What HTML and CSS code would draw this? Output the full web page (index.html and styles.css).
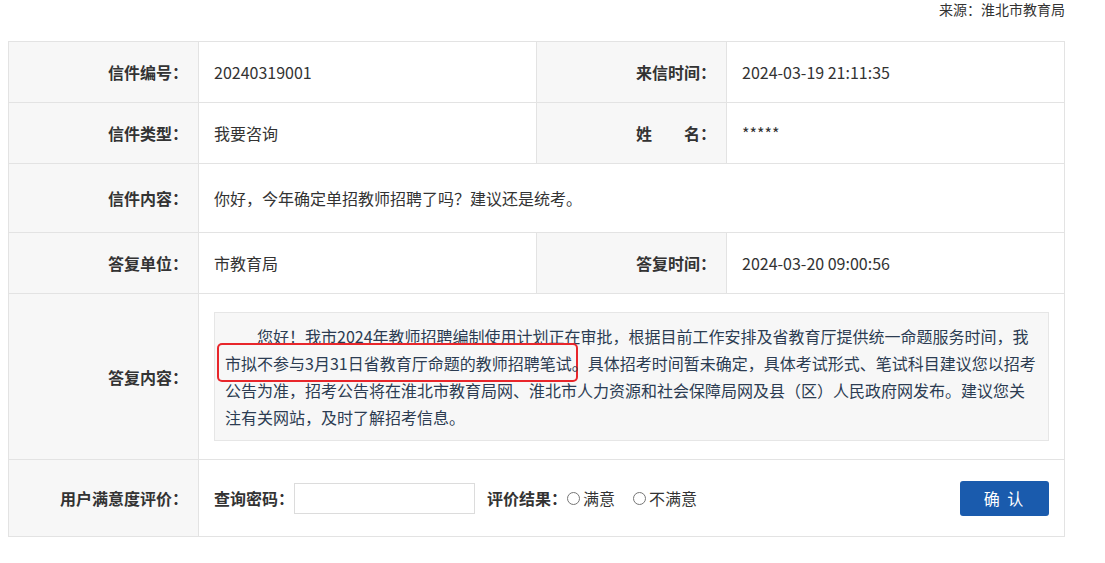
FILE: index.html
```html
<!DOCTYPE html>
<html lang="zh-CN">
<head>
<meta charset="utf-8">
<title>信件详情</title>
<link rel="stylesheet" href="styles.css">
</head>
<body>
<div class="letter-wrap">
	<div class="source">来源：淮北市教育局</div>

	<table class="letter-table">
		<colgroup>
			<col class="c-label">
			<col class="c-value">
			<col class="c-label">
			<col class="c-value">
		</colgroup>
		<tr class="row-std">
			<th>信件编号：</th>
			<td>20240319001</td>
			<th>来信时间：</th>
			<td>2024-03-19 21:11:35</td>
		</tr>
		<tr class="row-std">
			<th>信件类型：</th>
			<td>我要咨询</td>
			<th>姓　　名：</th>
			<td>*****</td>
		</tr>
		<tr class="row-content">
			<th>信件内容：</th>
			<td colspan="3">你好，今年确定单招教师招聘了吗？建议还是统考。</td>
		</tr>
		<tr class="row-std">
			<th>答复单位：</th>
			<td>市教育局</td>
			<th>答复时间：</th>
			<td>2024-03-20 09:00:56</td>
		</tr>
		<tr class="row-reply">
			<th>答复内容：</th>
			<td colspan="3">
				<div class="reply-box">
					<p>您好！我市2024年教师招聘编制使用计划正在审批，根据目前工作安排及省教育厅提供统一命题服务时间，我<span class="mark">市拟不参与3月31日省教育厅命题的教师招聘笔试</span>。具体招考时间暂未确定，具体考试形式、笔试科目建议您以招考公告为准，招考公告将在淮北市教育局网、淮北市人力资源和社会保障局网及县（区）人民政府网发布。建议您关注有关网站，及时了解招考信息。</p>
				</div>
			</td>
		</tr>
		<tr class="row-rate">
			<th>用户满意度评价：</th>
			<td colspan="3">
				<div class="rate-form">
					<span class="f-label">查询密码：</span>
					<input type="text" class="pwd-input">
					<span class="f-label f-result">评价结果：</span>
					<label class="opt"><input type="radio" name="rate">满意</label>
					<label class="opt"><input type="radio" name="rate">不满意</label>
					<button type="button" class="btn-ok">确 认</button>
				</div>
			</td>
		</tr>
	</table>
</div>
</body>
</html>
```

FILE: styles.css
```css
html, body{
	margin:0;
	padding:0;
	background:#fff;
	font-family:"Noto Sans CJK SC", "Noto Sans", sans-serif;
	color:#333;
}

.letter-wrap{
	width:1057px;
	padding:0 8px;
}

.source{
	text-align:right;
	font-size:14px;
	line-height:18px;
	height:41px;
	box-sizing:border-box;
}

.letter-table{
	width:1057px;
	border-collapse:collapse;
	table-layout:fixed;
	font-size:16px;
}

.letter-table col.c-label{
	width:190px;
}

.letter-table th,
.letter-table td{
	border:1px solid #e3e3e3;
	vertical-align:middle;
}

.letter-table th{
	background:#f7f7f7;
	text-align:right;
	font-weight:bold;
	padding:0 10px 0 0;
	white-space:nowrap;
}

.letter-table td{
	text-align:left;
	padding:0 15px;
}

.row-std{
	height:61px;
}

.row-content{
	height:69px;
}

.row-reply{
	height:166px;
}

.row-reply td{
	padding:18px 15px;
}

.row-rate{
	height:77px;
}

.reply-box{
	background:#f7f7f7;
	border:1px solid #e6e6e6;
	padding:10px 10px 9px;
	color:#2c3c52;
}

.reply-box p{
	margin:0;
	text-indent:2em;
	line-height:27px;
}

.mark{
	padding:6px 4px 5px 6px;
	margin:0 -4px 0 -6px;
	border-radius:3px;
	box-shadow:0 0 0 2px #e8262b;
}

.rate-form{
	display:flex;
	align-items:center;
}

.f-label{
	font-weight:bold;
}

.pwd-input{
	width:181px;
	height:31px;
	box-sizing:border-box;
	border:1px solid #dcdcdc;
	margin:0;
	padding:0 6px;
	outline:none;
}

.f-result{
	margin-left:12px;
}

.opt{
	display:flex;
	align-items:center;
	margin-right:18px;
}

.opt input{
	width:13px;
	height:13px;
	margin:1px 3px 0 0;
}

.btn-ok{
	margin-left:auto;
	width:89px;
	height:35px;
	border:0;
	border-radius:3px;
	background:#1a5bad;
	color:#fff;
	font-family:"Noto Sans CJK SC", sans-serif;
	font-size:16px;
	letter-spacing:2px;
	cursor:pointer;
}
```
